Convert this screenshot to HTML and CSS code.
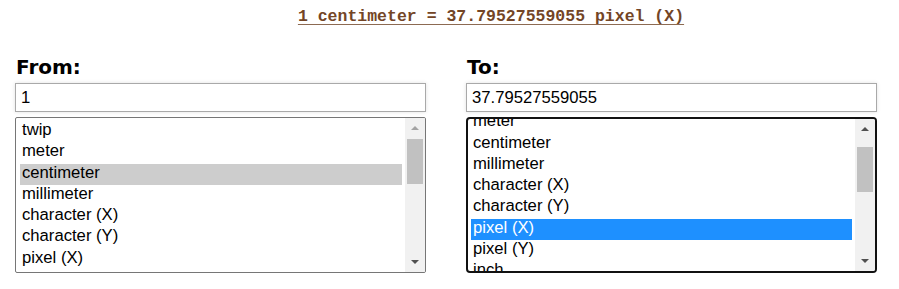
FILE: index.html
```html
<!DOCTYPE html>
<html>
<head>
    <meta charset="UTF-8">
    <title>Length Converter</title>
    <link rel="stylesheet" href="styles.css">
</head>
<body>
<div class="result">
    <span class="result-text">1 centimeter = 37.79527559055 pixel (X)</span>
</div>
<div class="converter">
    <!-- from side -->
    <div class="side">
        <h2>From:</h2>
        <div class="field">1</div>
        <div class="list">
            <div class="rows">
                <div class="row">twip</div>
                <div class="row">meter</div>
                <div class="row selected">centimeter</div>
                <div class="row">millimeter</div>
                <div class="row">character (X)</div>
                <div class="row">character (Y)</div>
                <div class="row">pixel (X)</div>
                <div class="row">pixel (Y)</div>
                <div class="row">inch</div>
                <div class="row">pica</div>
                <div class="row">point</div>
                <div class="row">foot</div>
                <div class="row">yard</div>
                <div class="row">mile</div>
                <div class="row">em</div>
                <div class="row">ex</div>
                <div class="row">percent</div>
                <div class="row">kilometer</div>
            </div>
            <div class="scrollbar">
                <div class="sb-button"><span class="arrow-up disabled"></span></div>
                <div class="sb-track"><div class="sb-thumb"></div></div>
                <div class="sb-button"><span class="arrow-down"></span></div>
            </div>
        </div>
    </div>
    <!-- to side -->
    <div class="side">
        <h2>To:</h2>
        <div class="field">37.79527559055</div>
        <div class="list focused">
            <div class="rows scrolled">
                <div class="row">twip</div>
                <div class="row">meter</div>
                <div class="row">centimeter</div>
                <div class="row">millimeter</div>
                <div class="row">character (X)</div>
                <div class="row">character (Y)</div>
                <div class="row active">pixel (X)</div>
                <div class="row">pixel (Y)</div>
                <div class="row">inch</div>
                <div class="row">pica</div>
                <div class="row">point</div>
                <div class="row">foot</div>
                <div class="row">yard</div>
                <div class="row">mile</div>
                <div class="row">em</div>
                <div class="row">ex</div>
                <div class="row">percent</div>
                <div class="row">kilometer</div>
            </div>
            <div class="scrollbar">
                <div class="sb-button"><span class="arrow-up"></span></div>
                <div class="sb-track"><div class="sb-thumb"></div></div>
                <div class="sb-button"><span class="arrow-down"></span></div>
            </div>
        </div>
    </div>
</div>
</body>
</html>
```

FILE: styles.css
```css
body {
    margin: 0;
    background: white;
    font-family: "Liberation Sans", Arial, sans-serif;
}

.result {
    padding-top: 6px;
    padding-left: 83px;
    text-align: center;
    line-height: 20px;
}

.result-text {
    font-family: "Liberation Mono", "Courier New", monospace;
    font-weight: bold;
    font-size: 16.5px;
    color: #734526;
    text-decoration: underline;
    text-decoration-color: #8c6a52;
    text-underline-offset: 3px;
}

.converter {
    display: flex;
    gap: 40px;
    padding-left: 15px;
    margin-top: 28px;
}

.side {
    width: 411px;
    display: flex;
    flex-direction: column;
}

h2 {
    font-family: "DejaVu Sans", sans-serif;
    font-size: 20px;
    line-height: 24px;
    font-weight: bold;
    margin: 0 0 4px 1px;
    color: black;
}

.field {
    height: 29px;
    box-sizing: border-box;
    border: 1px solid #a9a9a9;
    box-shadow: 0 0 4px rgba(0, 0, 0, 0.12);
    padding: 0 5px;
    font-size: 16.67px;
    line-height: 27px;
    color: black;
}

.list {
    margin-top: 5px;
    height: 156px;
    box-sizing: border-box;
    border: 1px solid #767676;
    border-radius: 2px;
    display: flex;
    overflow: hidden;
}

.list.focused {
    border: 2px solid #111;
    border-radius: 4px;
}

.rows {
    flex: 1;
    padding: 3px 3px 0 4px;
    overflow: hidden;
}

.focused .rows {
    padding: 2px 3px 0 3px;
}

.rows.scrolled .row:first-child {
    margin-top: -30px;
}

.row {
    height: 21.3px;
    box-sizing: border-box;
    padding: 0 2px 1px;
    font-size: 16.67px;
    line-height: 18.5px;
    color: black;
    white-space: nowrap;
}

.row.selected {
    background: #cdcdcd;
}

.row.active {
    background: #1e90ff;
    color: white;
}

.scrollbar {
    width: 20px;
    background: #f1f1f1;
    display: flex;
    flex-direction: column;
}

.sb-button {
    height: 20px;
    display: flex;
    align-items: center;
    justify-content: center;
}

.sb-track {
    flex: 1;
    padding: 1px 2px 0 2px;
}

.focused .sb-track {
    padding-top: 8px;
}

.sb-thumb {
    height: 45px;
    background: #c1c1c1;
}

.arrow-up {
    width: 0;
    height: 0;
    border-left: 4px solid transparent;
    border-right: 4px solid transparent;
    border-bottom: 4px solid #505050;
}

.arrow-up.disabled {
    border-bottom-color: #a3a3a3;
}

.arrow-down {
    width: 0;
    height: 0;
    border-left: 4px solid transparent;
    border-right: 4px solid transparent;
    border-top: 4px solid #505050;
}
```
